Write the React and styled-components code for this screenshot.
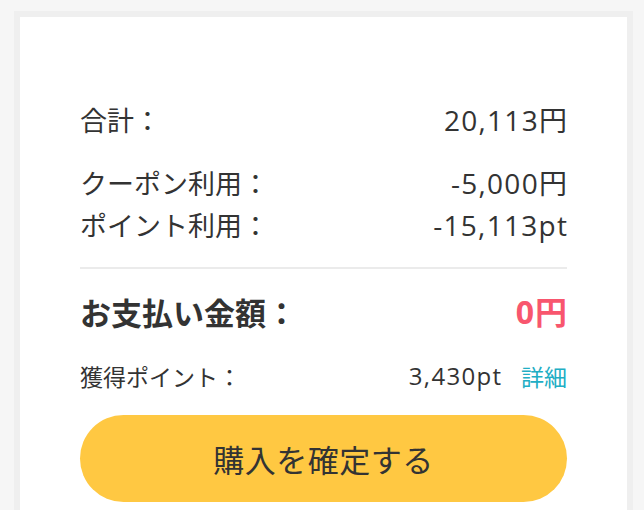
import styled, { createGlobalStyle } from 'styled-components';

const GlobalStyle = createGlobalStyle`
  html, body {
    margin: 0;
    padding: 0;
    background: #f6f6f6;
  }
  body {
    font-family: "Noto Sans CJK JP", "Noto Sans", sans-serif;
    color: #333;
  }
`;

const summary = [
  { label: 'クーポン利用：', value: '-5,000円' },
  { label: 'ポイント利用：', value: '-15,113pt' },
];

export default function App() {
  return (
    <>
      <GlobalStyle />
      <Page>
        <Card>
          <Row>
            <span>合計：</span>
            <Value size={28}>20,113円</Value>
          </Row>
          <Group>
            {summary.map((item) => (
              <Row key={item.label}>
                <span>{item.label}</span>
                <Value size={28}>{item.value}</Value>
              </Row>
            ))}
          </Group>
          <Divider />
          <TotalRow>
            <span>お支払い金額：</span>
            <TotalValue>0円</TotalValue>
          </TotalRow>
          <PointRow>
            <span>獲得ポイント：</span>
            <PointRight>
              <Value size={24}>3,430pt</Value>
              <DetailLink href="#">詳細</DetailLink>
            </PointRight>
          </PointRow>
          <ConfirmButton type="button">購入を確定する</ConfirmButton>
        </Card>
      </Page>
    </>
  );
}

const Page = styled.div`
  padding: 11px 11px 0 14px;
`;

const Card = styled.div`
  background: #fff;
  border: 6px solid #efefef;
  border-bottom: none;
  padding: 82px 60px 0;
  height: 500px;
  box-sizing: border-box;
  display: flex;
  flex-direction: column;
`;

const Row = styled.div`
  display: flex;
  justify-content: space-between;
  align-items: center;
  font-size: 27px;
  line-height: 42px;
  white-space: nowrap;
`;

// 数字は幅の広い欧文フォントで
const Value = styled.span`
  font-family: "Open Sans", "Noto Sans CJK JP", sans-serif;
  font-size: ${(props) => props.size}px;
  letter-spacing: 1.3px;
  margin-right: -1.3px;
  white-space: nowrap;
`;

const Group = styled.div`
  margin-top: 21px;
`;

const Divider = styled.hr`
  margin: 21px 0 0;
  border: none;
  height: 2px;
  background: #ebebeb;
`;

const TotalRow = styled.div`
  display: flex;
  justify-content: space-between;
  align-items: center;
  margin-top: 21px;
  font-size: 31px;
  line-height: 44px;
  font-weight: bold;
  white-space: nowrap;
`;

const TotalValue = styled.span`
  font-family: "Open Sans", "Noto Sans CJK JP", sans-serif;
  font-size: 32px;
  color: #f8566e;
  letter-spacing: 1px;
  margin-right: -1px;
`;

const PointRow = styled.div`
  display: flex;
  justify-content: space-between;
  align-items: center;
  margin-top: 24px;
  font-size: 23px;
  line-height: 36px;
  white-space: nowrap;
`;

const PointRight = styled.div`
  display: flex;
  align-items: center;
  gap: 20px;
`;

const DetailLink = styled.a`
  color: #21aec4;
  text-decoration: none;
`;

const ConfirmButton = styled.button`
  margin-top: 21px;
  height: 87px;
  border: none;
  border-radius: 44px;
  background: #ffc842;
  color: #333;
  font-family: inherit;
  font-size: 31px;
  letter-spacing: 0.5px;
  cursor: pointer;
`;
